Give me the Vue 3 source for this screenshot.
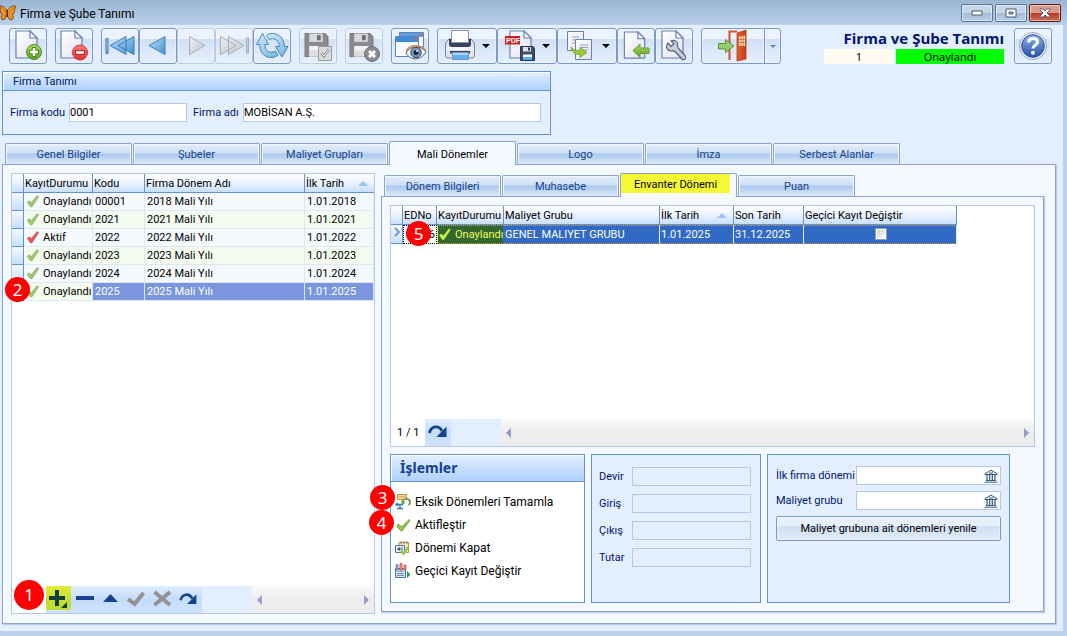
<script setup>
import { ref } from 'vue'

const companyCode = ref('0001')
const companyName = ref('MOBİSAN A.Ş.')

const mainTabs = ['Genel Bilgiler', 'Şubeler', 'Maliyet Grupları', 'Mali Dönemler', 'Logo', 'İmza', 'Serbest Alanlar']
const activeMain = ref('Mali Dönemler')
const subTabs = ['Dönem Bilgileri', 'Muhasebe', 'Envanter Dönemi', 'Puan']
const activeSub = ref('Envanter Dönemi')

const periods = [
  { status: 'Onaylandı', ok: true, code: '00001', name: '2018 Mali Yılı', start: '1.01.2018' },
  { status: 'Onaylandı', ok: true, code: '2021', name: '2021 Mali Yılı', start: '1.01.2021' },
  { status: 'Aktif', ok: false, code: '2022', name: '2022 Mali Yılı', start: '1.01.2022' },
  { status: 'Onaylandı', ok: true, code: '2023', name: '2023 Mali Yılı', start: '1.01.2023' },
  { status: 'Onaylandı', ok: true, code: '2024', name: '2024 Mali Yılı', start: '1.01.2024' },
  { status: 'Onaylandı', ok: true, code: '2025', name: '2025 Mali Yılı', start: '1.01.2025' }
]
const selectedCode = ref('2025')
const totals = ['Devir', 'Giriş', 'Çıkış', 'Tutar']
const temporary = ref(false)
</script>

<template>
  <div class="window">
    <svg class="defs" width="0" height="0" aria-hidden="true">
      <defs>
        <linearGradient id="gPaper" x1="0" y1="0" x2="1" y2="1"><stop offset="0" stop-color="#fff" /><stop offset="1" stop-color="#dfe4f0" /></linearGradient>
        <linearGradient id="gBlue" x1="0" y1="0" x2="1" y2="1"><stop offset="0" stop-color="#c4e6fa" /><stop offset="1" stop-color="#3f8fd0" /></linearGradient>
        <linearGradient id="gSync" x1="0" y1="0" x2="1" y2="1"><stop offset="0" stop-color="#d3eefb" /><stop offset="1" stop-color="#6fb4de" /></linearGradient>
        <linearGradient id="gGrey" x1="0" y1="0" x2="1" y2="1"><stop offset="0" stop-color="#eef0f3" /><stop offset="1" stop-color="#bcc1c9" /></linearGradient>
        <linearGradient id="gGreen" x1="0" y1="0" x2="0" y2="1"><stop offset="0" stop-color="#b5dd6a" /><stop offset="1" stop-color="#5a9e22" /></linearGradient>
        <linearGradient id="gRed" x1="0" y1="0" x2="0" y2="1"><stop offset="0" stop-color="#ff8080" /><stop offset="1" stop-color="#e02a2f" /></linearGradient>
        <linearGradient id="gHelp" x1="0" y1="0" x2="0" y2="1"><stop offset="0" stop-color="#8fb2e4" /><stop offset="1" stop-color="#2350a8" /></linearGradient>
        <linearGradient id="gDoor" x1="0" y1="0" x2="1" y2="0"><stop offset="0" stop-color="#e9602f" /><stop offset="1" stop-color="#c23d16" /></linearGradient>
      </defs>
      <symbol id="check" viewBox="0 0 14 14">
        <path d="M1 8.500 3.200 6.500 5.300 8.500 11 1.500 13 2.500 6 13H4.500Z" fill="currentColor" stroke="#0003" stroke-width=".6" />
      </symbol>
      <symbol id="floppy" viewBox="0 0 24 24">
        <path d="M1 1H20L23 4V23H1Z" fill="#8b8b8f" stroke="#77777c" />
        <path d="M5 1H18V9H5Z" fill="#d9dadd" /><path d="M12.500 2.500H16V7.500H12.500Z" fill="#6c6c71" />
        <path d="M5 13H19V23H5Z" fill="#f5f5f6" /><path d="M5 17H19V23H5Z" fill="#dedee1" />
      </symbol>
      <symbol id="paper" viewBox="0 0 24 30">
        <path d="M1 1H15L22 8V28H1Z" fill="url(#gPaper)" stroke="#6d7fae" stroke-width="1.200" />
        <path d="M15 1V8H22Z" fill="#fff" stroke="#6d7fae" stroke-width="1.200" />
      </symbol>
      <symbol id="bank" viewBox="0 0 14 14">
        <path d="M1 5.500V4.500L4 3 7 1.200 10 3 13 4.500V5.500Z" fill="#fff" stroke="#30597f" />
        <path d="M3 6V11M5.700 6V11M8.300 6V11M11 6V11" stroke="#30597f" stroke-width="1.200" />
        <path d="M5 4H9M2 11.500H12M.5 13.200H13.500" stroke="#30597f" />
      </symbol>
      <symbol id="redo" viewBox="0 0 20 14">
        <path d="M1.500 9C3 1.500 11 1 14 7" fill="none" stroke="currentColor" stroke-width="2.800" />
        <path d="M18.500 2.500V13H8.500Z" fill="currentColor" />
      </symbol>
    </svg>

    <header class="titlebar">
      <svg class="logo" viewBox="0 0 17 16" width="17" height="16" aria-hidden="true">
        <path d="M7 6C5 2 2 .500 0 1L.500 8 2.500 9 1 12 2 15 5 14 7 10 9 14 12 15 13.500 12 12 9 14 8 15.500 1C12 .500 9 2 7 6Z" fill="#f39a22" stroke="#6b3a12" stroke-width=".8" />
        <path d="M.500 1.500 6 8M15 1.500 8.500 8M3 13 6 9M11.500 13 8.500 9" stroke="#b8611a" stroke-width=".8" />
        <path d="M7.200 5V12" stroke="#3d200e" stroke-width="1.400" />
      </svg>
      <span class="caption">Firma ve Şube Tanımı</span>
      <div class="winbtns">
        <button aria-label="Simge durumuna küçült"><svg width="12" height="6" viewBox="0 0 12 6"><path d="M1 1H11V5H1Z" fill="#fff" stroke="#4d5969" /></svg></button>
        <button aria-label="Ekranı kapla"><svg width="12" height="10" viewBox="0 0 12 10"><path d="M1 1H11V9H1Z" fill="#fff" stroke="#4d5969" /><path d="M4 4H8V6H4Z" fill="#a9c3df" stroke="#4d5969" /></svg></button>
        <button class="close" aria-label="Kapat"><svg width="12" height="10" viewBox="0 0 12 10"><path d="M1 1H4L6 3 8 1H11V2L8 5 11 8V9H8L6 7 4 9H1V8L4 5 1 2V1Z" fill="#fff" stroke="#4d5969" stroke-width=".9" /></svg></button>
      </div>
    </header>

    <main class="body">
      <div class="toolbar">
        <div class="group">
          <button class="tool" aria-label="Yeni">
            <svg viewBox="0 0 36 34"><use href="#paper" x="5" y="1" width="24" height="30" /><circle cx="24" cy="23" r="7.500" fill="url(#gGreen)" stroke="#4f8a1e" /><path d="M24 18V28M19 23H29" stroke="#4f8a1e" stroke-width="4.500" /><path d="M24 19V27M20 23H28" stroke="#fff" stroke-width="2.500" /></svg>
          </button>
        </div>
        <div class="group">
          <button class="tool" aria-label="Sil">
            <svg viewBox="0 0 36 34"><use href="#paper" x="4" y="1" width="24" height="30" /><circle cx="24" cy="23.500" r="7.500" fill="url(#gRed)" stroke="#c93036" /><path d="M19 23.500H29" stroke="#b8242a" stroke-width="4.500" /><path d="M20 23.500H28" stroke="#fff" stroke-width="2.500" /></svg>
          </button>
        </div>
        <div class="group">
          <button class="tool" aria-label="İlk kayıt">
            <svg viewBox="0 0 36 34" fill="url(#gBlue)" stroke="#3d7bb5"><path d="M4 9.500H6V24.500H4ZM24 7.500V25.500L8 16.500ZM32 7.500V25.500L16 16.500Z" /></svg>
          </button>
          <button class="tool" aria-label="Önceki kayıt">
            <svg viewBox="0 0 36 34" fill="url(#gBlue)" stroke="#3d7bb5"><path d="M25 7.500V25.500L9 16.500Z" /></svg>
          </button>
          <button class="tool off" disabled aria-label="Sonraki kayıt">
            <svg viewBox="0 0 36 34" fill="url(#gGrey)" stroke="#a9aeb7"><path d="M11.500 7.500V25.500L27 16.500Z" /></svg>
          </button>
          <button class="tool off" disabled aria-label="Son kayıt">
            <svg viewBox="0 0 36 34" fill="url(#gGrey)" stroke="#a9aeb7"><path d="M4.500 7.500V25.500L20 16.500ZM12.500 7.500V25.500L28 16.500ZM30.500 9V24H32.500V9Z" /></svg>
          </button>
          <button class="tool" aria-label="Yenile">
            <svg viewBox="0 0 36 34" fill="url(#gSync)" stroke="#3a7db4" stroke-width=".9"><path d="M8.500 4.500 2.500 15.500H6C5.500 23 10 28.500 17 28.500 20 28.500 22.500 27.500 24 26L21.500 22C15.500 25 10.500 22 11 15.500H14.500Z" /><path d="M28 28 34 17.500H30.500C30 9.500 25 4.500 18.500 4.500 16 4.500 14 5 12.500 6.500L15 10.500C20 8 25 11 25.500 17.500H21.500Z" /></svg>
          </button>
        </div>
        <div class="group">
          <button class="tool off" disabled aria-label="Kaydet">
            <svg viewBox="0 0 36 34"><use href="#floppy" x="4" y="3" width="25" height="26" /><path d="M18.500 17.500H31.500V31.500H18.500Z" fill="#d9dadd" stroke="#999ba0" /><path d="M21 24 24 27 29 20" fill="none" stroke="#8a8b8f" stroke-width="2.500" /><path d="M21 24 24 27 29 20" fill="none" stroke="#fff" /></svg>
          </button>
        </div>
        <div class="group">
          <button class="tool off" disabled aria-label="Kaydet ve kapat">
            <svg viewBox="0 0 36 34"><use href="#floppy" x="3" y="3" width="25" height="26" /><circle cx="26" cy="25" r="7.500" fill="#8c8c90" stroke="#6f6f74" /><path d="M23 22 29 28M29 22 23 28" stroke="#fff" stroke-width="3" /></svg>
          </button>
        </div>
        <div class="group">
          <button class="tool" aria-label="Görünüm">
            <svg viewBox="0 0 36 34"><path d="M7.500 3.500H31.500V18H7.500Z" fill="#fff" stroke="#5d86ba" /><path d="M8 4H31V8H8Z" fill="#5c9ee0" /><path d="M3.500 7.500H26.500V27.500H3.500Z" fill="#f7faff" stroke="#5d86ba" /><path d="M4 8H26V13H4Z" fill="#3f8bd6" /><path d="M23 9H25V11H23ZM28 5H30V7H28Z" fill="#f4542f" /><path d="M14 24C18 16 29 16 34 23 29 32 18 32 14 24Z" fill="#eef2f8" stroke="#55617a" /><path d="M14 22C18 15 29 15 34 22" fill="none" stroke="#c98a52" stroke-width="1.500" /><circle cx="24" cy="23.500" r="5.200" fill="#7c9ac0" stroke="#34435f" /><circle cx="24" cy="23.500" r="2.500" fill="#16203a" /><circle cx="25" cy="22" r="1" fill="#fff" /></svg>
          </button>
        </div>
        <div class="group">
          <button class="tool menu shifted" aria-label="Yazdır">
            <svg viewBox="0 0 36 34"><path d="M3.500 14 7 10H29L32.500 14V27Q32 29 30 29H6Q4 29 3.500 27Z" fill="#dfe4ef" stroke="#78829f" /><path d="M7 10H29V15Q29 18 26 18H10Q7 18 7 15Z" fill="#38415f" /><path d="M9.500 1.500H26.500V13.500H9.500Z" fill="#fff" stroke="#8a95b5" /><path d="M4.500 18.500H31.500V21H4.500Z" fill="#f8faff" /><path d="M8 22H28V24.500H8Z" fill="#38415f" /><path d="M10.500 23.500H26.500V30.500H10.500Z" fill="#5fb0ee" stroke="#7e93b8" /><path d="M11 24H26V26H11Z" fill="#a9d6f7" /></svg>
            <i class="arrow"></i>
          </button>
          <button class="tool menu shifted" aria-label="PDF kaydet">
            <svg viewBox="0 0 36 34"><use href="#paper" x="7" y="1" width="24" height="30" /><path d="M3 7H18V15.500H3Z" fill="#c9201f" /><text x="4" y="13.500" class="pdf">PDF</text><path d="M18.500 17.500H31L32.500 19V31.500H18.500Z" fill="#414b68" stroke="#2b3350" /><path d="M21 18H29V22.500H21Z" fill="#dde4f0" /><path d="M26 18.500H28V21.500H26Z" fill="#2b3350" /><path d="M21 25.500H30V31H21Z" fill="#fff" /><path d="M21 28H30V31H21Z" fill="#54aeea" /></svg>
            <i class="arrow"></i>
          </button>
          <button class="tool menu" aria-label="Kopyala">
            <svg viewBox="0 0 36 34"><path d="M9.500 2.500H25.500V21.500H9.500Z" fill="url(#gPaper)" stroke="#6d7fae" /><path d="M14 8H21M14 11H21M14 14H19" stroke="#8e9dc3" /><path d="M17.500 10.500H33.500V30.500H17.500Z" fill="url(#gPaper)" stroke="#6d7fae" /><path d="M22 16H30M22 18.500H30M24 21H30" stroke="#8e9dc3" /><path d="M13 18C15 21 18 22 22 21.500V18.500L29 23.500 22 28.500V25.500C17 26 14 23 13 18Z" fill="#9ccc35" stroke="#6c9e1f" stroke-width=".8" /></svg>
            <i class="arrow"></i>
          </button>
          <button class="tool" aria-label="İçe aktar">
            <svg viewBox="0 0 36 34"><use href="#paper" x="5" y="2" width="24" height="29" /><path d="M15 21.500 22 15V19H31V24.500H22V28.500Z" fill="url(#gGreen)" stroke="#649b38" /></svg>
          </button>
          <button class="tool" aria-label="Ayarlar">
            <svg viewBox="0 0 36 34"><use href="#paper" x="5" y="1" width="24" height="30" /><path d="M12 14 15 17.500 18 14.500 15 12C18 10.500 21 12 21.500 15 21.500 17 21 18 23 20L29 26.500C31 29 28.500 32 26 30L19.500 23C18 21.500 17 22 15 22 11 21.500 9 18 12 14Z" fill="#c7cedb" stroke="#56627d" stroke-width="1.200" /></svg>
          </button>
        </div>
        <div class="group">
          <button class="tool exit" aria-label="Çıkış">
            <svg viewBox="0 0 62 34"><path d="M27.500 31V2.500H35" fill="none" stroke="#d94f22" stroke-width="2" /><path d="M35 4 44 1V30L35 32Z" fill="url(#gDoor)" stroke="#b53c14" stroke-width=".8" /><path d="M37 7.500 43 6.500V17H37Z" fill="#f6e6b0" /><path d="M39 7V17M41.200 7V17M37 10.500H43M37 13.500H43" stroke="#c4572a" stroke-width=".7" /><path d="M16.500 14.500H23.500V10.500L32 17 23.500 23.500V20H16.500Z" fill="#92cf6c" stroke="#58913b" /></svg>
          </button>
          <button class="tool drop" aria-label="Çıkış seçenekleri"><i class="arrow small"></i></button>
        </div>
        <div class="status">
          <h1>Firma ve Şube Tanımı</h1>
          <div class="badges"><span class="num">1</span><span class="approved">Onaylandı</span></div>
        </div>
        <button class="tool" aria-label="Yardım">
          <svg viewBox="0 0 36 34"><circle cx="18" cy="17" r="13.500" fill="#eef2f9" stroke="#9aa7c4" /><circle cx="18" cy="17" r="11.300" fill="url(#gHelp)" stroke="#2a4f9a" /><path d="M13.500 13.500C14 8 22.500 8.500 22.500 13 22.500 16.500 18 16 18 19.500" fill="none" stroke="#fff" stroke-width="3.200" /><circle cx="18" cy="23.700" r="2" fill="#fff" /></svg>
        </button>
      </div>

      <section class="company">
        <h2>Firma Tanımı</h2>
        <div class="company-row">
          <label for="code">Firma kodu</label><input id="code" v-model="companyCode" class="code" />
          <label for="cname">Firma adı</label><input id="cname" v-model="companyName" class="cname" />
        </div>
      </section>

      <nav class="tabs" role="tablist">
        <button v-for="t in mainTabs" :key="t" role="tab" class="tab" :class="{ active: t === activeMain }" @click="activeMain = t"><span>{{ t }}</span></button>
      </nav>

      <section class="page">
        <div class="grid left">
          <table>
            <colgroup><col class="w-ind" /><col class="w-status" /><col class="w-code" /><col class="w-name" /><col /></colgroup>
            <thead>
              <tr><th></th><th>KayıtDurumu</th><th>Kodu</th><th>Firma Dönem Adı</th><th>İlk Tarih<i class="sort"></i></th></tr>
            </thead>
            <tbody>
              <tr v-for="p in periods" :key="p.code" :class="{ selected: p.code === selectedCode }" @click="selectedCode = p.code">
                <td class="ind"></td>
                <td class="state"><svg :class="p.ok ? 'ok' : 'bad'" width="14" height="14"><use href="#check" /></svg>{{ p.status }}</td>
                <td>{{ p.code }}</td><td>{{ p.name }}</td><td>{{ p.start }}</td>
              </tr>
            </tbody>
          </table>
          <b class="mark m2">2</b>
          <b class="mark m1">1</b>
          <footer class="gridfoot">
            <div class="spacer"></div>
            <div class="nav">
              <button class="add" aria-label="Ekle"><svg viewBox="0 0 25 23"><path d="M11 3V19M3 11H19" stroke="#123f3c" stroke-width="4" /><path d="M21 15V21H15Z" fill="#123f3c" /></svg></button>
              <button aria-label="Çıkar"><svg viewBox="0 0 25 23"><path d="M3 11H21" stroke="#17438c" stroke-width="4" /></svg></button>
              <button aria-label="Düzenle"><svg viewBox="0 0 25 23"><path d="M4 15 11.500 7 19 15Z" fill="#17438c" /></svg></button>
              <button aria-label="Onayla"><svg viewBox="0 0 25 23"><path d="M3 12 9.500 17 18.500 6" fill="none" stroke="#929292" stroke-width="4" /></svg></button>
              <button aria-label="İptal"><svg viewBox="0 0 25 23"><path d="M3.500 5 19 18M19 5 3.500 18" stroke="#929292" stroke-width="4" /></svg></button>
              <button aria-label="Yenile"><svg viewBox="0 0 25 23" color="#17438c"><use href="#redo" x="2" y="5" width="19" height="13" /></svg></button>
            </div>
            <div class="blank"></div>
            <div class="scroll"><i></i><i class="r"></i></div>
          </footer>
        </div>

        <div class="detail">
          <nav class="tabs sub" role="tablist">
            <button v-for="t in subTabs" :key="t" role="tab" class="tab" :class="{ active: t === activeSub }" @click="activeSub = t"><span>{{ t }}</span></button>
          </nav>
          <div class="subpage">
            <div class="grid right">
              <table>
                <colgroup><col class="w-ind" /><col class="w-no" /><col class="w-state2" /><col class="w-group" /><col class="w-d1" /><col class="w-d2" /><col /></colgroup>
                <thead>
                  <tr><th></th><th>EDNo</th><th>KayıtDurumu</th><th>Maliyet Grubu</th><th>İlk Tarih<i class="sort"></i></th><th>Son Tarih</th><th>Geçici Kayıt Değiştir</th></tr>
                </thead>
                <tbody>
                  <tr class="current">
                    <td class="ind"><svg width="8" height="10" viewBox="0 0 8 10"><path d="M2 1 6 5 2 9" fill="none" stroke="#6f9ad8" stroke-width="2" /></svg></td>
                    <td class="no">6</td>
                    <td class="state"><svg class="lit" width="14" height="14"><use href="#check" /></svg>Onaylandı</td>
                    <td>GENEL MALIYET GRUBU</td><td>1.01.2025</td><td>31.12.2025</td>
                    <td class="chk"><input v-model="temporary" type="checkbox" aria-label="Geçici Kayıt Değiştir" /></td>
                  </tr>
                </tbody>
              </table>
              <b class="mark m5">5</b>
              <footer class="gridfoot">
                <div class="count">1 / 1</div>
                <div class="nav"><button aria-label="Yenile"><svg viewBox="0 0 25 23" color="#17438c"><use href="#redo" x="2" y="4" width="20" height="14" /></svg></button></div>
                <div class="blank"></div>
                <div class="scroll"><i></i><i class="r"></i></div>
              </footer>
            </div>

            <div class="panels">
              <section class="actions">
                <h3>İşlemler</h3>
                <ul>
                  <li><a href="#"><svg viewBox="0 0 16 16"><path d="M2.500 .500H11.500V5.500H2.500Z" fill="#f8dfa8" stroke="#b98f3c" /><path d="M4 3H10" stroke="#b98f3c" /><path d="M8.500 10A3.500 3.500 0 1 1 13.500 11" fill="none" stroke="#7d9a58" stroke-width="2" /><path d="M6 6.500 10.500 8 7 11.500Z" fill="#7da44e" /><path d="M1 10.500H8M2 14.500H8M3 9 1 10.500 3 12M5 11V14" fill="none" stroke="#2d83ad" stroke-width="1.400" /></svg>Eksik Dönemleri Tamamla</a></li>
                  <li><a href="#"><svg viewBox="0 0 16 16"><path d="M1.500 9 3.500 7 6.500 10 14 2.500 15 3.500 7 14H6Z" fill="#8fc450" stroke="#578f25" stroke-width=".7" /></svg>Aktifleştir</a></li>
                  <li><a href="#"><svg viewBox="0 0 16 16"><path d="M4 2.500H13.500V12.500H4Z" fill="#fce8b8" stroke="#bd923e" /><path d="M6 1V4M9 1V4M12 1V4" stroke="#7d8791" /><path d="M.500 5.500H9.500V12.500H.500Z" fill="#e9f0fa" stroke="#52739e" /><path d="M3 8H5V10H3ZM7 7V11" fill="#3d5a87" stroke="#3d5a87" /><path d="M6 11 8.500 14 13 7" fill="none" stroke="#8cc63f" stroke-width="2" /></svg>Dönemi Kapat</a></li>
                  <li><a href="#"><svg viewBox="0 0 16 16"><path d="M.500 5.500H10.500V14.500H.500Z" fill="#dbe8f9" stroke="#53719e" /><path d="M2 8H9M2 10.500H9M2 12.500H9" stroke="#6688ba" /><path d="M1 1.500H3V7H1Z" fill="#8aaad6" stroke="#53719e" stroke-width=".6" /><path d="M5 .500H7V7H5ZM9 2H11V7H9Z" fill="#f3a597" stroke="#c23e36" stroke-width=".8" /><path d="M12 8 15.500 11.500 12 15Z" fill="#2b9a3c" /></svg>Geçici Kayıt Değiştir</a></li>
                </ul>
                <b class="mark m3">3</b>
                <b class="mark m4">4</b>
              </section>

              <section class="totals">
                <div v-for="t in totals" :key="t" class="field"><label :for="'f-' + t">{{ t }}</label><input :id="'f-' + t" readonly /></div>
              </section>

              <section class="renew">
                <div class="field"><label for="first">İlk firma dönemi</label><span class="lookup"><input id="first" /><button aria-label="İlk firma dönemi seç"><svg width="14" height="14"><use href="#bank" /></svg></button></span></div>
                <div class="field"><label for="cost">Maliyet grubu</label><span class="lookup"><input id="cost" /><button aria-label="Maliyet grubu seç"><svg width="14" height="14"><use href="#bank" /></svg></button></span></div>
                <button class="push">Maliyet grubuna ait dönemleri yenile</button>
              </section>
            </div>
          </div>
        </div>
      </section>
    </main>
  </div>
</template>

<style>
body { margin: 0; background: #b9d1ea; }
</style>

<style scoped>
* { box-sizing: border-box; }
.window {
  min-height: 100vh; display: flex; flex-direction: column; padding-bottom: 5px;
  background: #b9d1ea; color: #000;
  font: 11px/14px Roboto, "Noto Sans", sans-serif;
}
.defs { position: absolute; }
button, input { font: inherit; color: inherit; margin: 0; padding: 0; }
h1, h2, h3, ul { margin: 0; padding: 0; font-weight: 400; }
button { cursor: pointer; }

.titlebar { height: 25px; display: flex; align-items: center; background: linear-gradient(#9bb5d2, #b9d1ea); }
.caption { flex: 1; margin-left: 3px; padding-top: 2px; font-size: 12px; line-height: 16px; }
.winbtns { display: flex; gap: 2px; margin-right: 6px; }
.winbtns button {
  width: 32px; height: 18px; display: flex; align-items: center; justify-content: center;
  border: 1px solid #5f738c; border-radius: 2px; box-shadow: inset 0 0 0 1px #ffffff80;
  background: linear-gradient(#c5d7ea 50%, #a3bdd9 50%, #b8d0e8);
}
.winbtns .close { border-color: #5c1d18; background: linear-gradient(#dc998d 50%, #b73a25 50%, #cb6b52); }

.body { flex: 1; display: flex; flex-direction: column; margin-right: 4px; padding: 3px 7px 7px 2px; background: #e3efff; }

.toolbar { display: flex; gap: 8px; padding: 0 4px 0 7px; }
.group { display: flex; }
.tool {
  width: 38px; height: 36px; display: flex; align-items: center; justify-content: center; flex: none;
  border: 1px solid #7b9ac8; border-radius: 3px;
  background: linear-gradient(#eaf3ff 28%, #cfdff2 28%, #dfebfb 75%, #e4efff);
  box-shadow: inset 0 0 0 1px #f3f8ff80;
}
.tool svg { width: 36px; height: 34px; flex: none; }
.tool.off { border-color: #bccbe2; }
.tool.menu { width: 60px; justify-content: flex-start; }
.tool.menu .arrow { margin-left: 8px; }
.tool.shifted svg { margin: 0 -4px 0 4px; }
.tool.exit { width: 64px; border-radius: 3px 0 0 3px; }
.tool.exit svg { width: 62px; }
.tool.drop { width: 17px; margin-left: -1px; border-radius: 0 3px 3px 0; }
.arrow { border: 4px solid transparent; border-top-color: #000; border-bottom: 0; }
.arrow.small { border-width: 3px 3px 0; border-top-color: #5b83bb; }
.pdf { font: bold 7px "Liberation Sans", sans-serif; fill: #fff; }
.status { flex: 1; display: flex; flex-direction: column; align-items: flex-end; margin-right: 2px; }
.status h1 { height: 21px; font: bold 15px/21px "Open Sans", sans-serif; color: #00156e; white-space: nowrap; }
.badges { display: flex; gap: 2px; text-align: center; font: 11px/15px "Noto Sans", sans-serif; }
.num { width: 70px; background: #fffbf0; }
.approved { width: 108px; background: #0f0; }

.company { width: 549px; margin-top: 7px; border: 1px solid #6593cf; color: #00156e; }
.company h2 { padding-left: 10px; height: 19px; font-size: 11px; line-height: 19px; border-bottom: 1px solid #6593cf; background: linear-gradient(#e3efff, #afd2ff); box-shadow: inset 1px 1px #fff; }
.company-row { display: flex; align-items: center; padding: 12px 9px 12px 7px; }
.company-row label { white-space: nowrap; width: 59px; }
.company-row .code + label { width: 50px; margin-left: 6px; }
input { height: 19px; min-width: 0; border: 1px solid #b3c9e8; background: #fff; color: #000; outline: 0; }
.code { width: 118px; }
.cname { flex: 1; }

.tabs { display: flex; align-items: flex-end; gap: 1px; height: 23px; margin-top: 6px; padding-left: 3px; }
.tab {
  width: 127px; height: 21px; padding-top: 2px; color: #15428b;
  border: 1px solid #8da2c6; border-bottom: 0; border-radius: 2px 2px 0 0; box-shadow: inset 1px 1px #f2f7ff, inset -1px 0 #f2f7ff;
  background: linear-gradient(#e1edfc, #cfe0f5 45%, #abc8ee 50%, #dbe9fb); line-height: 18px;
}
.tab.active { height: 24px; margin: 0 0 -1px; position: relative; color: #000; background: #f4f8ff; }
.tab.active span { display: block; }
.page {
  flex: 1; display: flex; gap: 6px; padding: 8px 11px 9px 8px;
  border: 1px solid #8da2c6; background: #f4f8ff; box-shadow: 1px 1px 1px #8da2c680;
}
.grid { position: relative; display: flex; flex-direction: column; border: 1px solid #b3c9e8; background: #fff; }
.left { width: 364px; flex: none; }
.detail { flex: 1; min-width: 0; display: flex; flex-direction: column; margin-bottom: 2px; }
.sub { margin-top: 0; }
.sub .tab { width: 117px; }
.sub .tab.active { padding: 0; }
.sub .tab.active span { margin: 0 6px 4px 0; padding-top: 2px; background: #f4f835; line-height: 17px; }
.subpage { flex: 1; display: flex; flex-direction: column; gap: 7px; padding: 8px; border: 1px solid #8da2c6; box-shadow: 1px 1px 1px #8da2c680; }
.right { flex: 1; }

table { border-collapse: separate; border-spacing: 0; table-layout: fixed; width: 100%; }
.right table { width: 566px; }
.w-ind { width: 12px; } .w-status { width: 69px; } .w-code { width: 52px; } .w-name { width: 160px; }
.w-no { width: 34px; } .w-state2 { width: 67px; } .w-group { width: 156px; } .w-d1 { width: 74px; } .w-d2 { width: 70px; }
th, td { padding: 1px 0 0 2px; overflow: hidden; white-space: nowrap; text-align: left; font-weight: 400; }
th { height: 19px; border-right: 1px solid #6593cf; border-bottom: 1px solid #6593cf; background: linear-gradient(#fff, #f0f6ff 40%, #c8dfff); padding-left: 1px; }
.left th:last-child { border-right: 0; }
td { height: 18px; line-height: 16px; border-right: 1px solid #dce8f8; border-bottom: 1px solid #dce8f8; background: #f5faff; }
tr:nth-child(even) td { background: #f4fcf0; }
td.ind, tr:nth-child(even) td.ind { border-color: #6593cf; background: linear-gradient(#f4f9ff, #c8dfff); text-align: center; padding: 0; }
tr.selected td:nth-child(n+3) { background: #7b96df; color: #fff; }
.state svg { vertical-align: -3px; margin-right: 3px; }
.ok { color: #9cc76a; } .bad { color: #ee4f4f; } .lit { color: #c7f04a; }
.sort { float: right; margin: 4px 6px 0 0; border: 5px solid transparent; border-bottom-color: #99c3f7; border-top: 0; }
tr.current td { height: 19px; background: #316ac5; color: #fff; border-bottom: 1px dotted #e09a3a; border-right-color: #e8f0ff; border-top: 1px dotted #e09a3a; padding-left: 1px; }
tr.current td.ind { background: linear-gradient(#f4f9ff, #c8dfff); border: 0; border-right: 1px solid #6593cf; border-bottom: 1px solid #6593cf; }
tr.current td.no { background: #fff; color: #000; text-align: right; padding-right: 1px; border: 1px dotted #000; }
tr.current td.state { background: #30682f; color: #f0f85a; border-right-color: #316ac5; box-shadow: inset 1px 0 #f4f835; }
tr.current td.chk { text-align: center; }
input[type="checkbox"] { appearance: none; width: 12px; height: 12px; border: 1px solid #8d9db5; background: linear-gradient(135deg, #c9ccd1, #fff); box-shadow: inset 0 0 0 1px #fff; vertical-align: -2px; }

.gridfoot { margin-top: auto; display: flex; height: 27px; background: #e3efff; }
.spacer { width: 34px; background: #fff; }
.count { width: 34px; background: #fff; padding-left: 6px; line-height: 28px; white-space: nowrap; }
.nav { display: flex; background: linear-gradient(#e0edff, #c4dcfb 50%, #cfe3ff); }
.nav button { width: 26px; height: 25px; border: 0; background: none; display: flex; align-items: center; justify-content: center; }
.nav svg { width: 25px; height: 23px; }
.nav .add { background: linear-gradient(#e4ee3a, #c3dd35 60%); height: 24px; width: 25px; margin-right: 1px; }
.blank { width: 50px; }
.scroll { flex: 1; display: flex; justify-content: space-between; align-items: center; padding: 0 5px; background: linear-gradient(#fafafa, #ededed 50%); }
.scroll i { border: 5px solid transparent; border-right-color: #8f9fc6; border-left: 0; }
.scroll i.r { border-left: 5px solid #8f9fc6; border-right: 0; }

.mark {
  position: absolute; z-index: 2; width: 25px; height: 25px; border-radius: 50%;
  background: #f00; color: #fff; text-align: center; font: 17px/25px "Noto Sans", sans-serif;
}
.m1 { width: 30px; height: 30px; line-height: 30px; left: 2px; bottom: 3px; }
.m2 { left: -7px; top: 103px; }
.m5 { left: 15px; top: 15px; }
.m3 { left: -21px; top: 30px; }
.m4 { left: -22px; top: 55px; }

.panels { display: flex; gap: 6px; min-height: 149px; }
.panels section { border: 1px solid #6593cf; background: #e3efff; color: #00156e; }
.panels .actions { position: relative; width: 195px; background: #fff; }
.actions h3 { height: 27px; padding-left: 9px; font: bold 14px/26px "Noto Sans", sans-serif; color: #15428b; border-bottom: 1px solid #6593cf; background: linear-gradient(#e3efff, #afd2ff); box-shadow: inset 1px 1px #fff; }
.actions ul { list-style: none; padding: 8px 0 0 4px; }
.actions li { height: 23px; }
.actions a { display: flex; align-items: center; gap: 4px; height: 23px; font-size: 12px; color: #000; text-decoration: none; white-space: nowrap; }
.actions a svg { width: 16px; height: 16px; }
.totals { width: 170px; padding: 12px 9px 0 7px; }
.totals .field { margin-bottom: 8px; }
.field { display: flex; align-items: center; }
.totals label { width: 33px; }
.totals input { flex: 1; background: none; }
.renew { width: 243px; padding: 11px 8px 0 8px; }
.renew .field { margin-bottom: 6px; }
.renew label { flex: none; width: 80px; white-space: nowrap; }
.lookup { flex: 1; min-width: 0; display: flex; height: 19px; border: 1px solid #b3c9e8; background: #fff; }
.lookup input { flex: 1; height: 17px; border: 0; }
.lookup button { flex: none; width: 18px; display: flex; align-items: center; justify-content: center; border: 0; background: none; }
.push {
  width: 100%; height: 25px; border: 1px solid #7b9ac8; border-radius: 2px; color: #000;
  background: linear-gradient(#e6f0fc 40%, #d0dff2 40%, #e0ebfa); box-shadow: inset 0 0 0 1px #f3f8ff80;
}
</style>
